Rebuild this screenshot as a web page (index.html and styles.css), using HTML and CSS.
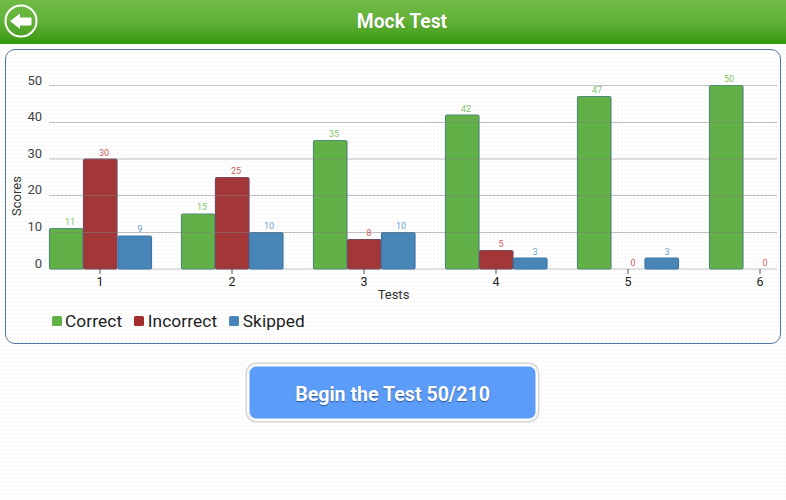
FILE: index.html
```html
<!DOCTYPE html>
<html lang="en">
<head>
<meta charset="utf-8">
<title>Mock Test</title>
<link rel="stylesheet" href="styles.css">
</head>
<body>
<header class="topbar">
  <button class="back" aria-label="Back">
    <svg width="34" height="34" viewBox="0 0 34 34">
      <circle cx="17" cy="17" r="15.5" class="back-ring"/>
      <path d="M6 17 L16 9.5 V13.5 H26.5 Q27.5 13.5 27.5 14.5 V20.5 Q27.5 21.5 26.5 21.5 H16 V25 Z" class="back-arrow"/>
    </svg>
  </button>
  <h1 class="title">Mock Test</h1>
</header>
<main class="content">
  <section class="card">
    <svg class="chart" width="772" height="291" viewBox="7 50 772 291">
      <g class="baseline">
        <path d="M49 85.5H777M49 269H777"/>
      </g>
      <g class="ticks">
        <path d="M100 269v5M232 269v5M364 269v5M496 269v5M628 269v5M760 269v5"/>
      </g>
      <g class="ylabels">
        <text x="42" y="85">50</text>
        <text x="42" y="121">40</text>
        <text x="42" y="158">30</text>
        <text x="42" y="194">20</text>
        <text x="42" y="231">10</text>
        <text x="42" y="268">0</text>
      </g>
      <g class="xlabels">
        <text x="100" y="286">1</text>
        <text x="232" y="286">2</text>
        <text x="364" y="286">3</text>
        <text x="496" y="286">4</text>
        <text x="628" y="286">5</text>
        <text x="760" y="286">6</text>
      </g>
      <text class="axis-title" x="393.5" y="299">Tests</text>
      <text class="axis-title" transform="translate(21 196) rotate(-90)">Scores</text>

      <g class="bars green">
        <rect x="49.5" y="228.5" width="33.5" height="40.5" rx="1.5"/>
        <rect x="181.5" y="214" width="33.5" height="55" rx="1.5"/>
        <rect x="313.5" y="140.5" width="33.5" height="128.5" rx="1.5"/>
        <rect x="445.5" y="115" width="33.5" height="154" rx="1.5"/>
        <rect x="577.5" y="96.5" width="33.5" height="172.5" rx="1.5"/>
        <rect x="709.5" y="85.5" width="33.5" height="183.5" rx="1.5"/>
      </g>
      <g class="bars red">
        <rect x="83.5" y="159" width="33.5" height="110" rx="1.5"/>
        <rect x="215.5" y="177.5" width="33.5" height="91.5" rx="1.5"/>
        <rect x="347.5" y="239.5" width="33.5" height="29.5" rx="1.5"/>
        <rect x="479.5" y="250.5" width="33.5" height="18.5" rx="1.5"/>
      </g>
      <g class="bars blue">
        <rect x="118" y="236" width="33.5" height="33" rx="1.5"/>
        <rect x="249.5" y="232.5" width="33.5" height="36.5" rx="1.5"/>
        <rect x="381.5" y="232.5" width="33.5" height="36.5" rx="1.5"/>
        <rect x="513.5" y="258" width="33.5" height="11" rx="1.5"/>
        <rect x="645" y="258" width="33.5" height="11" rx="1.5"/>
      </g>
      <g class="grid">
        <path d="M49 122.5H777M49 159H777M49 195.5H777M49 232.5H777"/>
      </g>

      <g class="vals vals-green">
        <text x="70" y="225">11</text>
        <text x="202" y="210">15</text>
        <text x="334" y="137">35</text>
        <text x="466" y="112">42</text>
        <text x="597" y="93">47</text>
        <text x="729" y="82">50</text>
      </g>
      <g class="vals vals-red">
        <text x="104" y="156">30</text>
        <text x="236" y="174">25</text>
        <text x="369" y="236">8</text>
        <text x="501" y="247">5</text>
        <text x="633" y="266">0</text>
        <text x="765" y="266">0</text>
      </g>
      <g class="vals vals-blue">
        <text x="140" y="232">9</text>
        <text x="269" y="229">10</text>
        <text x="401" y="229">10</text>
        <text x="535" y="255">3</text>
        <text x="667" y="255">3</text>
      </g>
    </svg>
    <ul class="legend">
      <li class="legend-item"><span class="swatch swatch-green"></span>Correct</li>
      <li class="legend-item"><span class="swatch swatch-red"></span>Incorrect</li>
      <li class="legend-item"><span class="swatch swatch-blue"></span>Skipped</li>
    </ul>
  </section>
  <div class="actions">
    <button class="begin">Begin the Test 50/210</button>
  </div>
</main>
</body>
</html>
```
FILE: styles.css
```css
* { box-sizing: border-box; }
html, body { margin: 0; padding: 0; }
body {
  width: 786px;
  height: 500px;
  overflow: hidden;
  font-family: Roboto, "Liberation Sans", sans-serif;
  background-color: #fff;
  background-image: radial-gradient(circle, #f8f8f8 0.8px, transparent 1.1px);
  background-size: 4px 4px;
}
.topbar {
  height: 44px;
  padding-left: 18px;
  display: flex;
  align-items: center;
  justify-content: center;
  position: relative;
  background: linear-gradient(#6fba45 0%, #64b33a 45%, #47a01f 88%, #349a0c 100%);
  border-bottom: 2px solid #359d0b;
}
.back {
  position: absolute;
  left: 4px;
  top: 4px;
  width: 34px;
  height: 34px;
  padding: 0;
  border: 0;
  background: none;
}
.back svg { display: block; }
.back-ring { fill: none; stroke: #fff; stroke-width: 2; }
.back-arrow { fill: #fff; }
.title {
  margin: 0;
  font-size: 19.3px;
  font-weight: 700;
  color: #fff;
  text-shadow: 0 0 1px rgba(40, 90, 10, .6);
}
.content { padding: 5px 5px 0; }
.card {
  width: 776px;
  height: 295px;
  border: 1.5px solid #4f76a2;
  border-radius: 10px;
  display: flex;
  flex-direction: column;
  position: relative;
}
.chart { display: block; position: absolute; left: .5px; top: -.5px; }
.baseline path { stroke: #c4c4c4; stroke-width: 1; fill: none; }
.grid path { stroke: #808080; stroke-opacity: .5; stroke-width: 1; fill: none; }
.ticks path { stroke: #555; stroke-width: 1; fill: none; }
.ylabels text { font-size: 13px; fill: #444; text-anchor: end; }
.xlabels text { font-size: 12.5px; fill: #222; text-anchor: middle; }
.axis-title { font-size: 13px; fill: #333; text-anchor: middle; }
.bars rect { stroke-width: 1.2; }
.green rect { fill: #62b148; stroke: #4f8a74; }
.red rect { fill: #a33636; stroke: #7a4a5c; }
.blue rect { fill: #4786b6; stroke: #3d76a6; }
.vals text { font-size: 9px; text-anchor: middle; }
.vals-green text { fill: #7fc36a; }
.vals-red text { fill: #c9605f; }
.vals-blue text { fill: #6d9fd0; }
.legend {
  list-style: none;
  margin: 0;
  padding: 261px 0 0 45.5px;
  display: flex;
  gap: 12px;
  position: relative;
}
.legend-item {
  display: flex;
  align-items: center;
  gap: 3.5px;
  font-size: 17.3px;
  letter-spacing: .1px;
  line-height: 20px;
  color: #222;
}
.swatch { width: 10px; height: 10px; border-radius: 1.5px; }
.swatch-green { background: #62b148; }
.swatch-red { background: #a52c2c; }
.swatch-blue { background: #4786b6; }
.actions {
  display: flex;
  justify-content: center;
  padding-top: 20px;
}
.begin {
  width: 291px;
  height: 57px;
  margin-left: -1px;
  padding: 3px 0 0;
  border: 1px solid #fff;
  border-radius: 9px;
  background: #5b9cf8;
  background-clip: padding-box;
  box-shadow: 0 0 0 1.5px #d6d6d6, inset 0 0 0 1.5px #fff;
  color: #fff;
  font-family: Roboto, sans-serif;
  font-size: 19.6px;
  font-weight: 700;
  text-shadow: 0 1px 1px rgba(30, 60, 110, .7);
}
```
